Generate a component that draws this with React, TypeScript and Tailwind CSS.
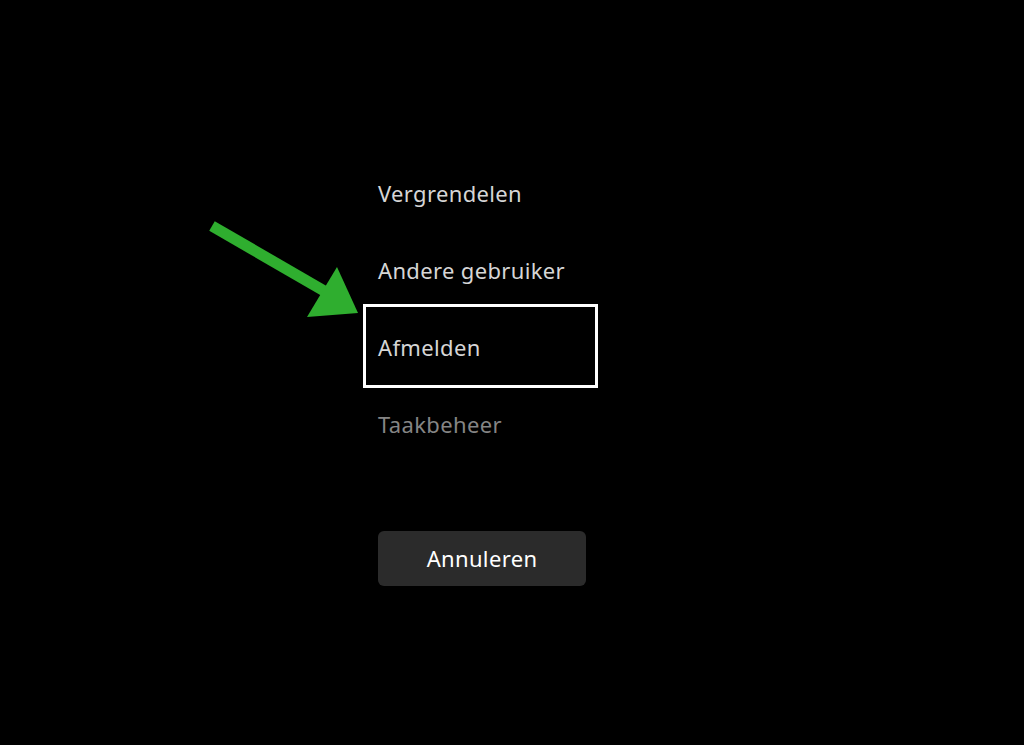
import React from "react";

const items = [
  { label: "Vergrendelen", dim: false, focus: false },
  { label: "Andere gebruiker", dim: false, focus: false },
  { label: "Afmelden", dim: false, focus: true },
  { label: "Taakbeheer", dim: true, focus: false },
];

function Arrow() {
  return (
    <svg
      className="absolute left-0 top-0 pointer-events-none"
      width="1024"
      height="745"
      viewBox="0 0 1024 745"
    >
      <line x1="212" y1="226" x2="326" y2="292" stroke="#2fae2f" strokeWidth="11" />
      <polygon points="337,267 358,313 307,317" fill="#2fae2f" />
    </svg>
  );
}

export default function App() {
  return (
    <div
      className="relative w-full h-[745px] bg-black overflow-hidden"
      style={{ fontFamily: '"Noto Sans", "Open Sans", sans-serif' }}
    >
      <div className="flex flex-col pt-[155px] pl-[378px]">
        {items.map((item) => (
          <div key={item.label} className="relative h-[77px] flex items-center">
            {item.focus && (
              <div className="absolute left-[-15px] top-[-5px] w-[235px] h-[84px] border-[3px] border-white" />
            )}
            <span
              className={`text-[22px] tracking-[0.35px] ${item.dim ? "text-[#858585]" : "text-[#d6d6d6]"}`}
            >
              {item.label}
            </span>
          </div>
        ))}
        <button className="mt-[68px] w-[208px] h-[55px] rounded-md bg-[#2b2b2b] text-white text-[22px] tracking-[0.35px] flex items-center justify-center">
          Annuleren
        </button>
      </div>
      <Arrow />
    </div>
  );
}
